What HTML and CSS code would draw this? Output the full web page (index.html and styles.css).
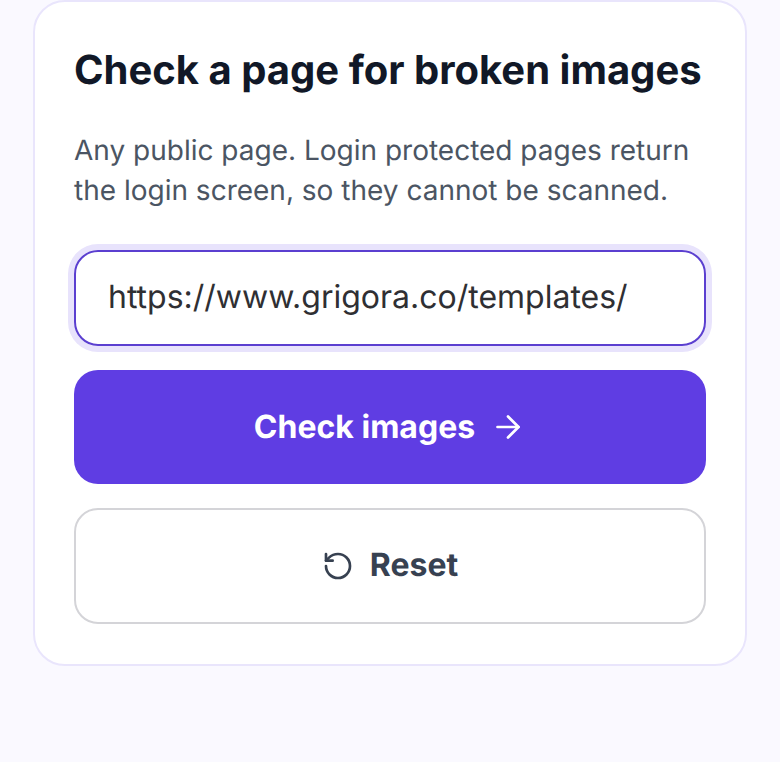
FILE: index.html
```html
<!DOCTYPE html>
<html lang="en">
<head>
<meta charset="utf-8">
<title>Check a page for broken images</title>
<link rel="stylesheet" href="styles.css">
</head>
<body>
<main class="page">
  <form class="card">
    <h1 class="title">Check a page for broken images</h1>
    <p class="lead">Any public page. Login protected pages return the login screen, so they cannot be scanned.</p>
    <div class="field">https://www.grigora.co/templates/</div>
    <button class="btn btn-primary" type="button">Check images
      <svg class="icon-arrow" viewBox="0 0 24 24" fill="none" stroke="currentColor" stroke-width="1.8" stroke-linecap="round" stroke-linejoin="round"><path d="M5 12h14"/><path d="m12 5 7 7-7 7"/></svg>
    </button>
    <button class="btn btn-secondary" type="button">
      <svg class="icon-reset" viewBox="0 0 24 24" fill="none" stroke="currentColor" stroke-width="2" stroke-linecap="round" stroke-linejoin="round"><path d="M3 12a9 9 0 1 0 9-9 9.75 9.75 0 0 0-6.74 2.74L3 8"/><path d="M3 3v5h5"/></svg>
      <span class="btn-label">Reset</span>
    </button>
  </form>
</main>
</body>
</html>
```
FILE: styles.css
```css
* { box-sizing: border-box; }
html, body { margin: 0; height: 100%; }
body {
  background: #faf9ff;
  font-family: Inter, "Liberation Sans", sans-serif;
  text-rendering: geometricPrecision;
}
.page { padding: 0 33px; }
.card {
  display: flex;
  flex-direction: column;
  height: 666px;
  padding: 40px 39px;
  background: #fff;
  border: 2px solid #e9e5fc;
  border-radius: 32px;
}
.title {
  margin: 0;
  font-size: 40px;
  line-height: 56px;
  font-weight: 700;
  color: #111827;
  white-space: nowrap;
}
.lead {
  margin: 32px 0 0;
  font-size: 28px;
  line-height: 40px;
  color: #4b5563;
}
.field {
  display: flex;
  align-items: center;
  height: 96px;
  margin-top: 40px;
  padding: 0 32px 4px;
  font-size: 32px;
  color: #2f2f33;
  border: 2px solid #5b3fd0;
  border-radius: 24px;
  box-shadow: 0 0 0 6px #e8e3fc;
}
.btn {
  display: flex;
  align-items: center;
  justify-content: center;
  gap: 16px;
  width: 100%;
  font: 700 32px Inter, "Liberation Sans", sans-serif;
  text-rendering: geometricPrecision;
  border-radius: 24px;
}
.icon-arrow { width: 36px; height: 36px; margin-left: -1px; }
.icon-reset { width: 32px; height: 32px; }
.btn-label { margin-bottom: 4px; }
.btn-primary {
  height: 114px;
  margin-top: 24px;
  padding-bottom: 2px;
  color: #fff;
  background: #5f3de3;
  border: 0;
}
.btn-secondary {
  height: 116px;
  margin-top: 24px;
  color: #374151;
  background: #fff;
  border: 2px solid #d4d4d8;
}
```
